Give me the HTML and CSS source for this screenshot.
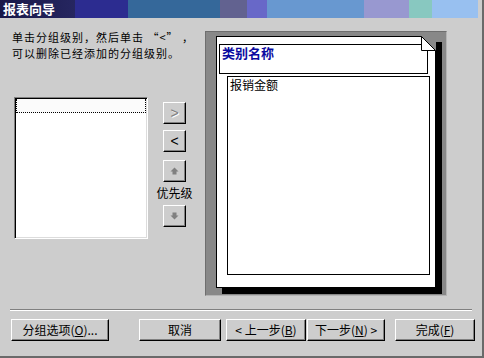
FILE: index.html
```html
<!DOCTYPE html>
<html lang="zh-CN">
<head>
<meta charset="utf-8">
<title>报表向导</title>
<link rel="stylesheet" href="styles.css">
</head>
<body>
<div class="window">
  <div class="titlebar">报表向导</div>
  <div class="body">
    <div class="left">
      <div class="intro">
        <div class="line">单击分组级别，然后单击 “&lt;” ，</div>
        <div class="line">可以删除已经添加的分组级别。</div>
      </div>
      <div class="listrow">
        <div class="listbox">
          <div class="focusrow"></div>
        </div>
        <div class="arrows">
          <button class="sbtn disabled">&gt;</button>
          <button class="sbtn gap6">&lt;</button>
          <button class="sbtn gap8">
            <svg width="9" height="8" viewBox="0 0 9 8"><path d="M4.5 0.5 L8.5 4.5 L6.5 4.5 L6.5 7.5 L2.5 7.5 L2.5 4.5 L0.5 4.5 Z" fill="#808080"/></svg>
          </button>
          <div class="prio">优先级</div>
          <button class="sbtn">
            <svg width="9" height="8" viewBox="0 0 9 8"><path d="M4.5 7.5 L8.5 3.5 L6.5 3.5 L6.5 0.5 L2.5 0.5 L2.5 3.5 L0.5 3.5 Z" fill="#808080"/></svg>
          </button>
        </div>
      </div>
    </div>
    <div class="preview">
      <div class="page">
        <div class="header"><span>类别名称</span></div>
        <div class="detail"><span>报销金额</span></div>
        <svg class="fold" width="15" height="15" viewBox="0 0 15 15">
          <path d="M0 0 L15 0 L15 15 Z" fill="#888888"/>
          <path d="M0.5 0.5 L14.5 14.5 L0.5 14.5 Z" fill="#ffffff" stroke="#000" stroke-width="1"/>
        </svg>
      </div>
    </div>
  </div>
  <div class="sep"></div>
  <div class="buttons">
    <button class="btn b1">分组选项(<u>O</u>)...</button>
    <button class="btn b2">取消</button>
    <button class="btn b3">&lt; 上一步(<u>B</u>)</button>
    <button class="btn b4">下一步(<u>N</u>) &gt;</button>
    <button class="btn b5">完成(<u>F</u>)</button>
  </div>
</div>
</body>
</html>
```
FILE: styles.css
```css
* { box-sizing: border-box; }
html, body { margin: 0; padding: 0; background: #cdcdcd; }
body {
  width: 484px;
  height: 358px;
  overflow: hidden;
  font-family: "Noto Sans CJK SC", "Noto Sans", sans-serif;
  font-size: 12px;
  color: #000;
}
.window {
  width: 484px;
  height: 358px;
  background: #cdcdcd;
  border-right: 2px solid #6a6a6a;
  border-bottom: 2px solid #6a6a6a;
  display: flex;
  flex-direction: column;
}
.titlebar {
  height: 18px;
  line-height: 18px;
  padding-left: 3px;
  color: #fff;
  font-weight: bold;
  font-size: 13px;
  background: linear-gradient(to right,
    #181848 0, #262660 75px,
    #2c2c90 75px, #2c2c90 128px,
    #35689a 128px, #35689a 220px,
    #626290 220px, #626290 247px,
    #6868c8 247px, #6868c8 267px,
    #6898d0 267px, #6898d0 364px,
    #9898d0 364px, #9898d0 409px,
    #88c8c0 409px, #88c8c0 432px,
    #98c0f0 432px, #98c0f0 478px,
    #cdcdcd 478px);
}
.body {
  height: 291px;
  display: flex;
  padding-left: 12px;
}
.left { width: 179px; }
.intro {
  margin-top: 11px;
  display: flex;
  flex-direction: column;
}
.line {
  height: 16px;
  line-height: 16px;
  font-size: 11px;
  letter-spacing: 1px;
  white-space: nowrap;
}
.listrow {
  display: flex;
  margin-top: 36px;
}
.listbox {
  margin-left: 2px;
  width: 134px;
  height: 142px;
  background: #fff;
  border: 1px solid;
  border-color: #808080 #fff #fff #808080;
  box-shadow: inset 1px 1px 0 #000, inset -1px -1px 0 #dcdcdc;
  padding: 1px 1px 0 1px;
}
.focusrow {
  height: 14px;
  border: 1px dotted #000;
  border-top: none;
  background: #fbfbfb;
}
.arrows {
  margin-left: 15px;
  width: 23px;
  padding-top: 5px;
  display: flex;
  flex-direction: column;
  align-items: center;
}
.sbtn {
  width: 23px;
  height: 22px;
  padding: 0;
  margin: 0;
  background: #cdcdcd;
  border: 1px solid;
  border-color: #fff #000 #000 #fff;
  box-shadow: inset -1px -1px 0 #808080;
  font-family: "Liberation Sans", sans-serif;
  font-size: 14px;
  line-height: 18px;
  color: #000;
  display: flex;
  align-items: center;
  justify-content: center;
}
.sbtn.disabled { color: #808080; text-shadow: 1px 1px 0 #fff; }
.gap6 { margin-top: 6px; }
.gap8 { margin-top: 8px; }
.prio {
  width: 40px;
  text-align: center;
  line-height: 14px;
  margin: 4px 0 5px 0;
  white-space: nowrap;
}
.preview {
  margin-left: 14px;
  margin-top: 13px;
  width: 242px;
  height: 265px;
  background: #888888;
  border: 1px solid;
  border-color: #6e6e6e #b4b4b4 #b4b4b4 #6e6e6e;
  padding: 4px 0 0 10px;
}
.page {
  position: relative;
  width: 220px;
  height: 252px;
  background: #fff;
  border: 1px solid #000;
  box-shadow: 6px 6px 0 #000;
  padding: 7px 0 0 2px;
}
.header {
  width: 209px;
  height: 30px;
  border: 1px solid #000;
  padding: 1px 0 0 2px;
  color: #0a0aa0;
  font-weight: bold;
  font-size: 13px;
  line-height: 14px;
}
.detail {
  margin: 2px 0 0 8px;
  width: 203px;
  height: 199px;
  border: 1px solid #000;
  padding: 1px 0 0 2px;
  line-height: 14px;
}
.fold {
  position: absolute;
  top: -1px;
  right: -1px;
}
.sep {
  margin: 0 10px 0 10px;
  height: 2px;
  border-top: 1px solid #808080;
  border-bottom: 1px solid #fff;
}
.buttons {
  display: flex;
  margin-top: 8px;
  padding-left: 11px;
}
.btn {
  height: 22px;
  padding: 0;
  margin: 0;
  background: #cdcdcd;
  border: 1px solid;
  border-color: #fff #000 #000 #fff;
  box-shadow: inset -1px -1px 0 #808080;
  font-family: "Noto Sans CJK SC", sans-serif;
  font-size: 12px;
  line-height: 18px;
  color: #000;
  white-space: nowrap;
}
.b1 { width: 98px; }
.b2 { width: 82px; margin-left: 30px; }
.b3 { width: 80px; margin-left: 5px; }
.b4 { width: 78px; margin-left: 1px; }
.b5 { width: 80px; margin-left: 10px; }
```
